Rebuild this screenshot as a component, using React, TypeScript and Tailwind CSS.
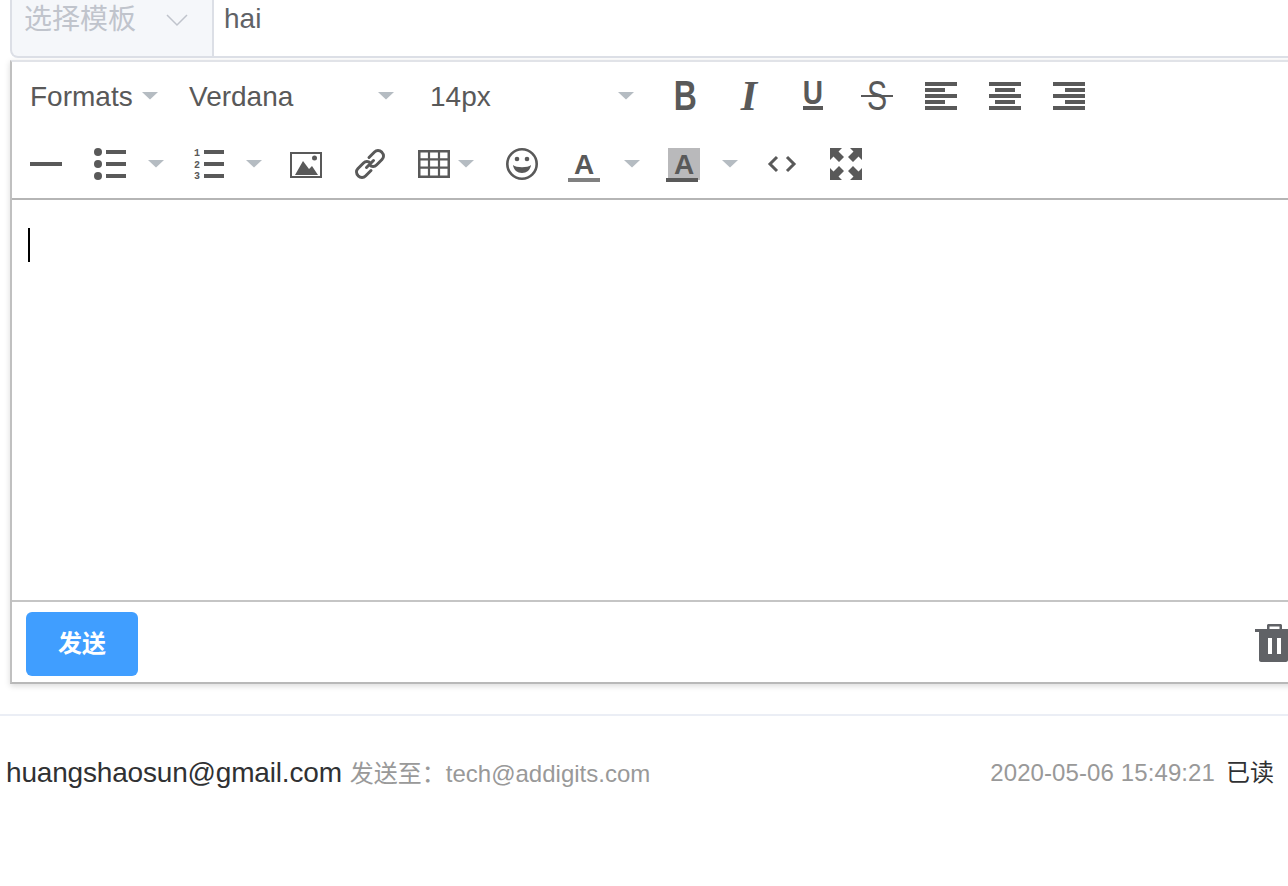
import React from "react";

const C = "#595959";

function Caret({ className = "" }: { className?: string }) {
  return (
    <svg width="16" height="8" viewBox="0 0 16 8" className={className}>
      <path d="M0 0H16L8 7.5Z" fill="#b5bcc2" />
    </svg>
  );
}

function Icon({ className = "", children }: { className?: string; children: React.ReactNode }) {
  return (
    <svg width="32" height="32" viewBox="0 0 32 32" className={`shrink-0 overflow-visible ${className}`}>
      {children}
    </svg>
  );
}

function Glyph({ className = "", children }: { className?: string; children: React.ReactNode }) {
  return <span className={`relative flex h-8 w-8 shrink-0 items-center justify-center text-[#595959] ${className}`}>{children}</span>;
}

function ListLines({ x }: { x: number }) {
  return (
    <>
      <rect x={x} y="2" width="20" height="4" fill={C} />
      <rect x={x} y="14" width="20" height="4" fill={C} />
      <rect x={x} y="26" width="20" height="4" fill={C} />
    </>
  );
}

function Align({ ml, kind }: { ml: string; kind: "l" | "c" | "r" }) {
  const sx = kind === "l" ? 0 : kind === "c" ? 6 : 12;
  return (
    <Icon className={ml}>
      <rect x="0" y="0" width="32" height="4" fill={C} />
      <rect x={sx} y="6" width="20" height="4" fill={C} />
      <rect x="0" y="12" width="32" height="4" fill={C} />
      <rect x={sx} y="18" width="20" height="4" fill={C} />
      <rect x="0" y="24" width="32" height="4" fill={C} />
    </Icon>
  );
}

export default function App() {
  return (
    <div className="h-[886px] w-[1288px] overflow-hidden bg-white font-['Liberation_Sans','Noto_Sans_CJK_SC',sans-serif]">
      <div className="ml-[10px] flex h-[60px] w-[1300px] items-stretch">
        <div className="flex h-[58px] w-[204px] shrink-0 items-center rounded-bl-lg border-x-2 border-b-2 border-[#dcdfe6] bg-[#f5f7fa] pb-[16px] pl-3">
          <span className="text-[28px] leading-none text-[#c0c4cc]">选择模板</span>
          <svg width="24" height="14" viewBox="0 0 24 14" className="ml-[29px]">
            <path d="M2 2L12 12L22 2" fill="none" stroke="#c0c4cc" strokeWidth="1.5" />
          </svg>
        </div>
        <div className="flex h-[58px] flex-1 items-center border-b-2 border-[#dcdfe6] pb-[18px] pl-2.5">
          <span className="text-[28px] leading-none text-[#606266]">hai</span>
        </div>
      </div>

      <div className="ml-[10px] h-[624px] w-[1300px] border-x-2 border-b-2 border-t-2 border-x-[#c0c0c0] border-b-[#b8b8b8] border-t-[#e1e3e8] bg-white shadow-[0_2px_6px_rgba(0,0,0,0.15)]">
        <div className="h-[138px] border-b-2 border-[#b5b5b5]">
          <div className="flex h-[68px] items-center text-[28px] text-[#595959]">
            <span className="ml-[18px] mt-[2px] w-[112px] leading-none">Formats</span>
            <Caret />
            <span className="ml-[31px] mt-[2px] w-[189px] leading-none">Verdana</span>
            <Caret />
            <span className="ml-[36px] mt-[2px] w-[188px] leading-none">14px</span>
            <Caret />
            <Glyph className="ml-[35px]">
              <span className="scale-x-[0.76] font-['Liberation_Sans'] text-[42px] font-bold leading-none">B</span>
            </Glyph>
            <Glyph className="ml-[32px]">
              <span className="font-['Liberation_Serif'] text-[42px] font-bold italic leading-none">I</span>
            </Glyph>
            <Glyph className="ml-[32px]">
              <span className="-mt-[8px] scale-x-[0.85] text-[33px] font-bold leading-none">U</span>
              <span className="absolute bottom-[2px] left-[6px] h-1 w-5 bg-[#595959]" />
            </Glyph>
            <Glyph className="ml-[32px]">
              <span className="scale-x-[0.72] text-[42px] leading-none">S</span>
              <span className="absolute left-0 top-[15px] h-0.5 w-8 bg-[#595959]" />
            </Glyph>
            <Align ml="ml-[32px] mt-[4px]" kind="l" />
            <Align ml="ml-[32px] mt-[4px]" kind="c" />
            <Align ml="ml-[32px] mt-[4px]" kind="r" />
          </div>

          <div className="flex h-[68px] items-center">
            <Icon className="ml-[18px]">
              <rect x="0" y="14" width="32" height="4" fill={C} />
            </Icon>
            <Icon className="ml-[32px]">
              <circle cx="4" cy="4" r="4" fill={C} />
              <circle cx="4" cy="16" r="4" fill={C} />
              <circle cx="4" cy="28" r="4" fill={C} />
              <ListLines x={12} />
            </Icon>
            <Caret className="ml-[22px]" />
            <Icon className="ml-[30px]">
              <text x="0" y="8" fontFamily="Liberation Mono" fontSize="10" fontWeight="700" fill={C}>1</text>
              <text x="0" y="19.5" fontFamily="Liberation Mono" fontSize="10" fontWeight="700" fill={C}>2</text>
              <text x="0" y="31" fontFamily="Liberation Mono" fontSize="10" fontWeight="700" fill={C}>3</text>
              <ListLines x={10} />
            </Icon>
            <Caret className="ml-[20px]" />
            <Icon className="ml-[28px]">
              <rect x="1" y="5" width="30" height="24" fill="none" stroke={C} strokeWidth="2" />
              <path d="M5 27L13 13L19 21L22 18L28 27Z" fill={C} />
              <circle cx="24.5" cy="10" r="2.5" fill={C} />
            </Icon>
            <Icon className="ml-[32px]">
              <g fill="none" stroke={C} strokeWidth="3" strokeLinecap="round">
                <path d="M12.5 19.5L19.5 12.5" />
                <path d="M15 9.5L20.5 4C22.5 2 25.5 2 27.8 4.2C30 6.5 30 9.5 28 11.5L22.5 17C20.5 19 17.5 18.8 15.8 17" />
                <path d="M17 22.5L11.5 28C9.5 30 6.5 30 4.2 27.8C2 25.5 2 22.5 4 20.5L9.5 15C11.5 13 14.5 13.2 16.2 15" />
              </g>
            </Icon>
            <Icon className="ml-[32px]">
              <g fill="none" stroke={C}>
                <rect x="1.25" y="3.25" width="29.5" height="25.5" strokeWidth="2.5" />
                <path d="M11 3V28M21 3V28M1 11.3H31M1 19.7H31" strokeWidth="2.2" />
              </g>
            </Icon>
            <Caret className="ml-[8px]" />
            <Icon className="ml-[32px]">
              <circle cx="16" cy="16" r="14.7" fill="none" stroke={C} strokeWidth="2.6" />
              <circle cx="11" cy="11" r="2.3" fill={C} />
              <circle cx="21" cy="11" r="2.3" fill={C} />
              <path d="M7 17C10 20 22 20 25 17C24.5 22 20.5 25 16 25C11.5 25 7.5 22 7 17Z" fill={C} />
            </Icon>
            <span className="relative ml-[30px] flex h-8 w-8 shrink-0 justify-center">
              <span className="mt-[3px] text-[28px] font-bold leading-none text-[#595959]">A</span>
              <span className="absolute bottom-[-2px] left-0 h-1 w-8 bg-[#808080]" />
            </span>
            <Caret className="ml-[24px]" />
            <span className="relative ml-[28px] flex h-8 w-8 shrink-0 justify-center bg-[#b9b9bb]">
              <span className="mt-[3px] text-[28px] font-bold leading-none text-[#595959]">A</span>
              <span className="absolute bottom-[-2px] left-[-2px] h-1 w-8 bg-[#595959]" />
            </span>
            <Caret className="ml-[22px]" />
            <Icon className="ml-[28px]">
              <path d="M11 9L4 16L11 23M21 9L28 16L21 23" fill="none" stroke={C} strokeWidth="3" />
            </Icon>
            <Icon className="ml-[32px]">
              <path d="M0 0H12L8.5 3.5L14 9L9 14L3.5 8.5L0 12Z" fill={C} />
              <path d="M32 0H20L23.5 3.5L18 9L23 14L28.5 8.5L32 12Z" fill={C} />
              <path d="M0 32H12L8.5 28.5L14 23L9 18L3.5 23.5L0 20Z" fill={C} />
              <path d="M32 32H20L23.5 28.5L18 23L23 18L28.5 23.5L32 20Z" fill={C} />
            </Icon>
          </div>
        </div>

        <div className="h-[402px] border-b-2 border-[#c5c5c5] pl-4 pt-7">
          <div className="h-[34px] w-0.5 bg-black" />
        </div>

        <div className="flex h-[78px] items-start justify-between pr-[17px] pt-2.5">
          <button className="ml-[14px] flex h-16 w-28 items-center justify-center rounded-md bg-[#409eff] text-2xl font-bold text-white">
            发送
          </button>
          <svg width="36" height="38" viewBox="0 0 36 38" className="mt-3">
            <path d="M0 5H12V1.5C12 .7 12.7 0 13.5 0H25.5C26.3 0 27 .7 27 1.5V5H36V8H33V36C33 37.2 32 38 31 38H6C5 38 4 37.2 4 36V8H0ZM14.5 2.5V5H24.5V2.5Z" fill="#606266" fillRule="evenodd" />
            <rect x="13" y="14" width="4" height="16" fill="#fff" />
            <rect x="22" y="14" width="4" height="16" fill="#fff" />
          </svg>
        </div>
      </div>

      <div className="mt-[30px] flex h-[116px] items-center justify-between border-t-2 border-[#ebeef5] pl-1.5 pr-[14px]">
        <div className="flex items-baseline">
          <span className="text-[28px] tracking-[-0.18px] text-[#303133]">huangshaosun@gmail.com</span>
          <span className="ml-2 text-2xl text-[#999999]">发送至：</span>
          <span className="text-2xl text-[#999999]">tech@addigits.com</span>
        </div>
        <div className="flex items-baseline">
          <span className="text-2xl tracking-[0.1px] text-[#999999]">2020-05-06 15:49:21</span>
          <span className="ml-[11px] text-2xl text-[#303133]">已读</span>
        </div>
      </div>
    </div>
  );
}
